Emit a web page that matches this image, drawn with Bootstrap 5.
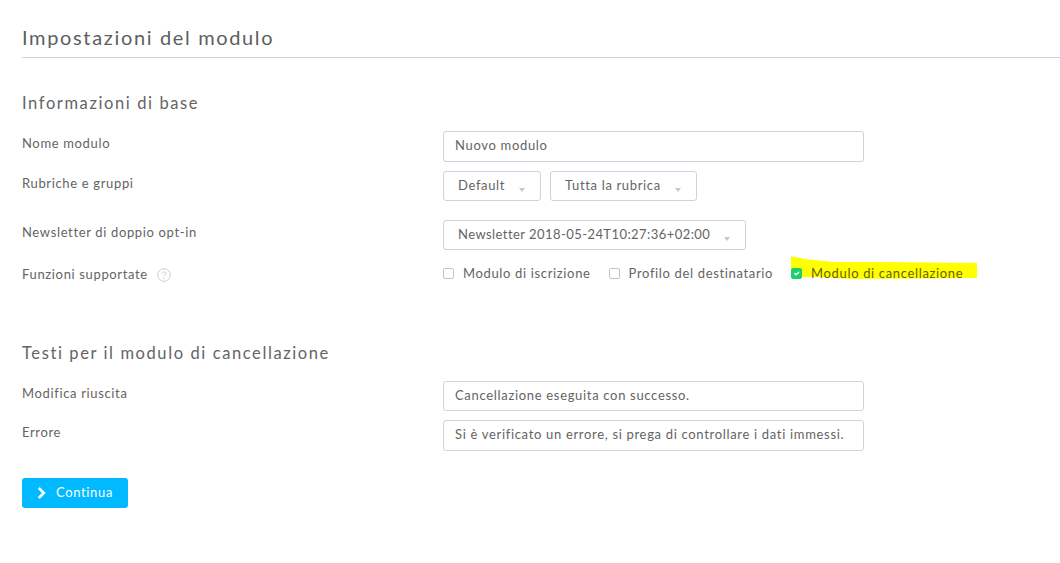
<!DOCTYPE html>
<html lang="it">
<head>
<meta charset="utf-8">
<title>Impostazioni del modulo</title>
<link href="https://cdn.jsdelivr.net/npm/bootstrap@5.3.0/dist/css/bootstrap.min.css" rel="stylesheet">
<style>
html,body{height:563px;overflow:hidden;background:#fff}
body{font-family:Lato,"Open Sans",sans-serif;color:#646464;font-size:13px;letter-spacing:.65px}
.page-wrap{padding:0 0 0 22px}
.page-title{font-family:Lato,sans-serif;font-size:20px;line-height:24px;font-weight:400;letter-spacing:1.65px;color:#5e5e5e;margin:0;padding:25px 0 8px;border-bottom:1px solid #cdd3dc}
.sec-title{font-family:Lato,sans-serif;font-size:16.5px;line-height:20px;font-weight:400;letter-spacing:1.6px;color:#646464;margin:0}
.sec-one{padding-top:35px;margin-bottom:18px}
.sec-two{padding-top:60px;margin-bottom:18px}
.frow{display:flex;align-items:flex-start}
.flabel{width:421px;flex:none;padding-top:4px;padding-bottom:1px;line-height:16px}
.flabel-check{padding-top:1px}
.ctl.form-control{width:421px;height:31px;padding:0 11px 3px;font-size:13px;letter-spacing:.68px;color:#646464;border:1px solid #cdd3dc;border-radius:3px;font-family:inherit}
.ctl.short-ctl{height:30px}
.pick.btn{height:30px;padding:0 15px 2px 14px;font-size:13px;letter-spacing:.65px;color:#646464;border:1px solid #cdd3dc;border-radius:3px;background:#fff;line-height:26px}
.pick.stamp{letter-spacing:.44px}
.pick.dropdown-toggle::after{margin-left:14px;border-top:4px solid #c4c8cf;border-right:3.5px solid transparent;border-left:3.5px solid transparent;border-bottom:0;vertical-align:-2px}
.form-check-input.tick{width:11px;height:11px;margin:0;border:1px solid #bfc5cf;border-radius:2px;flex:none;position:relative}
.form-check-input.tick:checked{background-color:#1fcf6b;border-color:#1fcf6b}
.opt{display:flex;align-items:center;gap:9px;position:relative}
.hilite{position:absolute;left:0;top:-9px;width:186px;height:23px;z-index:-1}
.help-dot{margin-left:9px;vertical-align:-3px}
.gap-nine{margin-bottom:9px}
.go.btn{width:106px;height:30px;padding:0 0 1px;background:#00b9ff;border:0;border-radius:3px;color:#fff;font-size:13px;letter-spacing:.65px;display:flex;align-items:center;justify-content:center;gap:9px}
</style>
</head>
<body>
<div class="page-wrap">
  <h1 class="page-title">Impostazioni del modulo</h1>

  <h2 class="sec-title sec-one">Informazioni di base</h2>

  <div class="frow gap-nine">
    <div class="flabel">Nome modulo</div>
    <input class="form-control ctl" type="text" value="Nuovo modulo">
  </div>
  <div class="frow" style="margin-bottom:19px">
    <div class="flabel">Rubriche e gruppi</div>
    <div class="d-flex" style="gap:9px">
      <button type="button" class="btn pick dropdown-toggle">Default</button>
      <button type="button" class="btn pick dropdown-toggle">Tutta la rubrica</button>
    </div>
  </div>
  <div class="frow" style="margin-bottom:15px">
    <div class="flabel">Newsletter di doppio opt-in</div>
    <button type="button" class="btn pick stamp dropdown-toggle">Newsletter 2018-05-24T10:27:36+02:00</button>
  </div>
  <div class="frow">
    <div class="flabel flabel-check">Funzioni supportate<svg class="help-dot" width="14" height="14" viewBox="0 0 14 14"><circle cx="7" cy="7" r="6.3" fill="none" stroke="#c5d0dc" stroke-width="1"/><path d="M5.2 5.6c0-1 .8-1.6 1.8-1.6s1.8.6 1.8 1.5c0 1.3-1.8 1.4-1.8 2.6" fill="none" stroke="#c5d0dc" stroke-width="1"/><circle cx="7" cy="10" r=".7" fill="#c5d0dc"/></svg></div>
    <div class="d-flex" style="line-height:16px;position:relative;z-index:0">
      <label class="opt" style="margin-right:18px"><input class="form-check-input tick" type="checkbox">Modulo di iscrizione</label>
      <label class="opt" style="margin-right:18px"><input class="form-check-input tick" type="checkbox">Profilo del destinatario</label>
      <label class="opt" style="color:#6a6200">
        <svg class="hilite" viewBox="0 0 186 23" aria-hidden="true"><path d="M0 0 L14 3 L42 6 L90 6 L186 7 L186 22 L60 23 L28 21 L0 21Z" fill="#ffff00"/></svg>
        <input class="form-check-input tick" type="checkbox" checked>Modulo di cancellazione</label>
    </div>
  </div>

  <h2 class="sec-title sec-two">Testi per il modulo di cancellazione</h2>

  <div class="frow gap-nine">
    <div class="flabel">Modifica riuscita</div>
    <input class="form-control ctl short-ctl" type="text" value="Cancellazione eseguita con successo.">
  </div>
  <div class="frow" style="margin-bottom:27px">
    <div class="flabel">Errore</div>
    <input class="form-control ctl" type="text" value="Si è verificato un errore, si prega di controllare i dati immessi.">
  </div>

  <button type="button" class="btn go">
    <svg width="10" height="12" viewBox="0 0 10 12"><path d="M1.8 1 L6.8 6 L1.8 11" fill="none" stroke="#fff" stroke-width="2.6"/></svg>Continua
  </button>
</div>
</body>
</html>
